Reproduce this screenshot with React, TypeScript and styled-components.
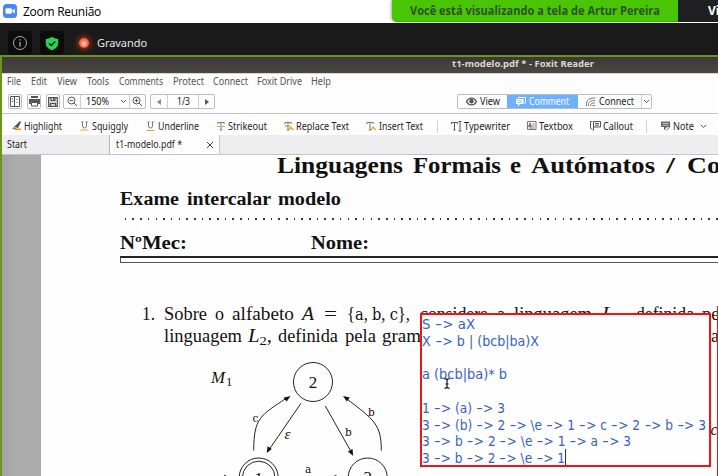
import React, { useLayoutEffect, useRef, useState } from "react";
import styled, { createGlobalStyle, css } from "styled-components";

const Global = createGlobalStyle`
  * { box-sizing: border-box; }
  body { margin: 0; background: #fff; overflow: hidden; }
`;

/* ---------- text that fills a given width ---------- */

const Spread = styled.span<{ $w: number; $ml: number }>`
  display: block;
  flex: none;
  width: ${(p) => p.$w}px;
  margin-left: ${(p) => p.$ml}px;
  white-space: pre;
`;

const Stretched = styled.span`
  display: inline-block;
  transform-origin: 0 50%;
`;

type LabelProps = { w: number; ml?: number; children: React.ReactNode };

/* Adjusts the letter spacing. */
function Label({ w, ml = 0, children }: LabelProps) {
  const inner = useRef<HTMLSpanElement>(null);
  const [gap, setGap] = useState(0);
  useLayoutEffect(() => {
    const el = inner.current;
    if (!el) return;
    const count = (el.textContent || "").length;
    const natural = el.getBoundingClientRect().width - gap * count;
    setGap((w - natural) / Math.max(count, 1));
  }, [w]);
  return (
    <Spread $w={w} $ml={ml}>
      <span ref={inner} style={{ letterSpacing: gap }}>{children}</span>
    </Spread>
  );
}

/* Adjusts the width of the glyphs themselves. */
function Word({ w, ml = 0, children }: LabelProps) {
  const inner = useRef<HTMLSpanElement>(null);
  const [scale, setScale] = useState(1);
  useLayoutEffect(() => {
    const el = inner.current;
    if (el) setScale((w * scale) / el.getBoundingClientRect().width);
  }, [w]);
  return (
    <Spread $w={w} $ml={ml}>
      <Stretched ref={inner} style={{ transform: `scaleX(${scale})` }}>{children}</Stretched>
    </Spread>
  );
}

/* ---------- meeting window ---------- */

const Window = styled.div`
  width: 718px;
  height: 476px;
  overflow: hidden;
  display: flex;
  flex-direction: column;
  font-family: "Noto Sans", "Open Sans", sans-serif;
`;

const MeetingTitle = styled.header`
  height: 23px;
  flex: none;
  display: flex;
  padding-left: 3px;
  font: 12px/23px "Open Sans", sans-serif;
  color: #000;
  > svg { margin-top: 4px; flex: none; }
`;

const Banner = styled.div`
  width: 286px;
  height: 22px;
  margin-left: 291px;
  padding-left: 18px;
  background: #49c503;
  border-bottom: 1px solid #3eae02;
  border-bottom-left-radius: 5px;
  box-shadow: -1px 0 3px rgba(0, 0, 0, 0.35);
  color: #2f5123;
  font-weight: 700;
  line-height: 22px;
`;

const BannerMenu = styled.div`
  flex: 1;
  height: 22px;
  padding-left: 30px;
  background: #202023;
  color: #fff;
  font-weight: 700;
  line-height: 22px;
  overflow: hidden;
`;

const MeetingBar = styled.div`
  height: 32px;
  flex: none;
  background: #1a1a1a;
  display: flex;
  align-items: flex-end;
  padding-left: 8px;
  color: #e6e6e6;
  font: 11px/24px "Noto Sans", sans-serif;
`;

const Badge = styled.div`
  width: 24px;
  height: 24px;
  margin-right: 8px;
  border-radius: 4px;
  background: #0b0c0b;
  display: grid;
  place-items: center;
`;

const Recording = styled.i`
  width: 10px;
  height: 10px;
  margin: 0 0 7px 7px;
  border-radius: 50%;
  background: radial-gradient(ellipse at 50% 55%, #ffc0b0 0 15%, #ff6a55 45%, #f04a35 100%);
  box-shadow: 0 0 4px 2px #8a2f10;
`;

/* ---------- shared screen: PDF reader ---------- */

const Shared = styled.main`
  flex: 1;
  min-height: 0;
  border-top: 2px solid #6b961b;
  border-left: 2px solid #6b961b;
  display: flex;
  flex-direction: column;
  background: #fdfdfd;
`;

const ReaderTitle = styled.div`
  height: 16px;
  flex: none;
  display: flex;
  padding-left: 450px;
  background: linear-gradient(#3b3836, #4b4843);
  color: #dcd8d0;
  font: 700 9.5px/14px "Noto Sans", sans-serif;
`;

const MenuBar = styled.nav`
  height: 19px;
  flex: none;
  display: flex;
  padding-left: 5px;
  border-top: 1px solid #d5d3d0;
  color: #555;
  font-size: 10px;
  line-height: 15px;
`;

const Toolbar = styled.div`
  height: 22px;
  flex: none;
  display: flex;
  padding: 2px 0 0 6px;
  border-bottom: 1px solid #c4c4c4;
  font-size: 10px;
  color: #222;
`;

const Group = styled.div<{ $ml?: number }>`
  display: flex;
  height: 15px;
  margin-left: ${(p) => p.$ml ?? 0}px;
  border: 1px solid #bdbdbd;
  border-radius: 2px;
  background: #fdfdfd;
  overflow: hidden;
`;

const Cell = styled.div<{ $w: number; $active?: boolean; $divided?: boolean }>`
  width: ${(p) => p.$w}px;
  display: flex;
  align-items: center;
  justify-content: center;
  gap: 3px;
  line-height: 13px;
  background: ${(p) => (p.$active ? "#6cb1fb" : "transparent")};
  color: ${(p) => (p.$active ? "#fff" : "#222")};
  border-left: ${(p) => (p.$divided ? "1px solid #cfcfcf" : "0")};
`;

const CommentBar = styled.div`
  height: 21px;
  flex: none;
  display: flex;
  align-items: center;
  padding: 3px 0 0 10px;
  font-size: 10px;
  line-height: 16px;
  color: #1d1d1d;
  > svg { flex: none; }
`;

const Slot = styled.i<{ $w: number }>`
  flex: none;
  width: ${(p) => p.$w}px;
`;

const Divider = styled.i<{ $ml: number; $mr: number }>`
  flex: none;
  width: 1px;
  height: 13px;
  margin: 0 ${(p) => p.$mr}px 0 ${(p) => p.$ml}px;
  background: #d2d2d2;
`;

const Tabs = styled.div`
  height: 20px;
  flex: none;
  display: flex;
  background: #eeeef0;
  border-bottom: 1px solid #c3c3c5;
  font-size: 10px;
  line-height: 19px;
  color: #222;
`;

const Tab = styled.div<{ $w: number; $pad: number; $active?: boolean }>`
  width: ${(p) => p.$w}px;
  padding-left: ${(p) => p.$pad}px;
  display: flex;
  align-items: center;
  ${(p) => p.$active && css`
    background: #fdfdfe;
    border-left: 1px solid #b5b5b7;
    border-right: 1px solid #c9c9cb;
  `}
`;

/* ---------- document ---------- */

const Desk = styled.section`
  flex: 1;
  min-height: 0;
  padding-left: 39px;
  background: linear-gradient(90deg, #a2a3a5, #ababab 12px);
`;

const Page = styled.article`
  position: relative;
  height: 321px;
  overflow: hidden;
  background: #fefefe;
  color: #111;
  font-family: "Liberation Serif", serif;
  font-size: 18px;
`;

const Line = styled.div<{ $top: number; $left: number; $h: number; $bold?: boolean; $size?: number }>`
  display: flex;
  margin-top: ${(p) => p.$top}px;
  padding-left: ${(p) => p.$left}px;
  height: ${(p) => p.$h}px;
  line-height: ${(p) => p.$h}px;
  font-size: ${(p) => p.$size ?? 18}px;
  font-weight: ${(p) => (p.$bold ? 700 : 400)};
  sub { font-size: 0.7em; line-height: 0; vertical-align: -3px; }
  code { font-family: "DejaVu Serif", serif; font-size: 0.88em; line-height: 0; }
`;

const Leader = styled.div`
  height: 2px;
  margin: 9px 0 0 83px;
  background: repeating-linear-gradient(90deg, transparent 0 0.8px, #333 0.8px 2.4px, transparent 2.4px 7.68px);
`;

const DoubleRule = styled.div`
  height: 7px;
  margin: 3px 0 0 79px;
  border: 1px solid #555;
  border-top: 2px solid #222;
  border-right: 0;
`;

const Diagram = styled.svg`
  display: block;
  fill: none;
  stroke: #222;
  stroke-width: 1;
  text { fill: #111; stroke: none; }
  .tt { font: 10.5px "DejaVu Serif", serif; }
  .it { font-style: italic; }
`;

const Note = styled.div`
  position: absolute;
  left: 379px;
  top: 158px;
  width: 291px;
  height: 154px;
  border: 2px solid #f01414;
  background: #fefefe;
  color: #3560c2;
  font-family: "DejaVu Sans Condensed", "DejaVu Sans", sans-serif;
  font-size: 14.5px;
  font-stretch: condensed;
`;

const NoteLine = styled.div`
  height: 16.75px;
  display: flex;
  line-height: 18px;
`;

const Dash = styled.span`
  display: inline-block;
  transform: scaleX(1.5);
  margin: 0 1.5px;
`;

const Caret = styled.i`
  width: 1px;
  height: 16px;
  background: #333;
`;

const Margin = styled.i`
  position: absolute;
  right: 0;
  top: 151px;
  bottom: 0;
  width: 1px;
  background: #f01414;
`;

const Pointer = styled.svg`
  position: absolute;
  left: 402px;
  top: 223px;
`;

/* ---------- icons ---------- */

const stroke = { fill: "none", stroke: "#555", strokeWidth: 1 };

const Chevron = () => (
  <svg width="7" height="5" {...stroke}><path d="M1 1l2.5 2.5L6 1" /></svg>
);

const Magnifier = ({ plus }: { plus?: boolean }) => (
  <svg width="11" height="11" {...stroke}>
    <circle cx="4.5" cy="4.5" r="3.5" />
    <path d="M7 7l3 3M2.8 4.5h3.4" />
    {plus && <path d="M4.5 2.8v3.4" />}
  </svg>
);

type MarkKind = "squiggly" | "underline" | "strike" | "replace" | "insert";

const Mark = ({ kind }: { kind: MarkKind }) => (
  <svg width="10" height="11" {...stroke} stroke="#777">
    {kind === "squiggly" || kind === "underline" ? (
      <>
        <path d="M2.5 1v4a2 2 0 0 0 4 0V1M1.3 1h2M5.7 1h2" />
        <path stroke="#e8a63a" d={kind === "underline" ? "M.5 9.5h8" : "M.5 9.5l1.5-1 1.5 1 1.5-1 1.5 1 1.5-1"} />
      </>
    ) : (
      <path d="M.8 3V1.5h6.4V3M4 1.5V9M2.8 9h2.4" />
    )}
    {kind === "strike" && <path stroke="#e8a63a" d="M0 5.5h8" />}
    {kind === "replace" && <path stroke="#e8a63a" strokeWidth="1.3" d="M1 5h5M5 9l1.8-3L9.3 9" />}
    {kind === "insert" && <path stroke="#e8a63a" strokeWidth="1.3" d="M5.2 9l2-3.2L9.5 9" />}
  </svg>
);

/* ---------- content ---------- */

const menus: [string, number, number][] = [
  ["File", 0, 14], ["Edit", 10, 16], ["View", 10, 20], ["Tools", 10, 22], ["Comments", 10, 44],
  ["Protect", 10, 31], ["Connect", 9, 35], ["Foxit Drive", 9, 45], ["Help", 9, 20],
];

const noteLines: [string, number][] = [
  ["S -> aX", 53], ["X -> b | (bcb|ba)X", 117], ["", 0], ["a (bcb|ba)* b", 85], ["", 0],
  ["1 -> (a) -> 3", 83], ["3 -> (b) -> 2 -> \\e -> 1 -> c -> 2 -> b -> 3", 284],
  ["3 -> b -> 2 -> \\e -> 1 -> a -> 3", 209], ["3 -> b -> 2 -> \\e -> 1", 143],
];

const withDashes = (text: string) =>
  text.split("-").flatMap((part, i) => (i ? [<Dash key={i}>-</Dash>, part] : [part]));

export default function App() {
  return (
    <Window>
      <Global />
      <MeetingTitle>
        <svg width="14" height="14">
          <rect width="14" height="14" rx="3.5" fill="#4489f5" />
          <rect x="2.5" y="4.3" width="6.4" height="5.4" rx="1.2" fill="#fff" />
          <path d="M9.4 6.3l2.4-1.6v4.8L9.4 7.9z" fill="#fff" />
        </svg>
        <Label ml={6} w={78}>Zoom Reunião</Label>
        <Banner><Word w={250}>Você está visualizando a tela de Artur Pereira</Word></Banner>
        <BannerMenu>Vi</BannerMenu>
      </MeetingTitle>
      <MeetingBar>
        <Badge>
          <svg width="16" height="16" fill="none" stroke="#aaa">
            <circle cx="8" cy="8" r="6.5" /><path d="M8 7v4.5M8 4.3v1.3" strokeWidth="1.3" />
          </svg>
        </Badge>
        <Badge>
          <svg width="14" height="15">
            <path d="M7 .8C5.2 2.2 3 2.8.8 2.9v4.4c0 3.5 3 5.7 6.2 7 3.2-1.3 6.2-3.5 6.2-7V2.9C11 2.8 8.8 2.2 7 .8z" fill="#25d558" />
            <path d="M3.9 7.2l2.3 2.3 4-4.1" fill="none" stroke="#08210f" strokeWidth="1.5" />
          </svg>
        </Badge>
        <Recording />
        <Label ml={8} w={50}>Gravando</Label>
      </MeetingBar>
      <Shared>
        <ReaderTitle><Label w={142}>t1-modelo.pdf * - Foxit Reader</Label></ReaderTitle>
        <MenuBar>
          {menus.map(([name, ml, w]) => <Word key={name} ml={ml} w={w}>{name}</Word>)}
        </MenuBar>
        <Toolbar>
          <Group>
            <Cell $w={12}>
              <svg width="10" height="11" {...stroke}><path d="M.5.5h9v10h-9zM4.5.5v10M1.8 3h1.4M1.8 5.5h1.4M7 3v1M7 6v1" /></svg>
            </Cell>
          </Group>
          <Group $ml={5}>
            <Cell $w={12}>
              <svg width="11" height="11"><path fill="#555" d="M2 0h7v2H2zM0 3h11v5H9V6H2v2H0z" /><path {...stroke} d="M2.5 6.5h6v3.5h-6z" /></svg>
            </Cell>
          </Group>
          <Group $ml={5}>
            <Cell $w={12}>
              <svg width="10" height="10"><path {...stroke} strokeWidth="1.3" d="M.7.7h8.6v8.6H.7zM3 .7v3h4v-3M2 6.5h6M2.5 6.5v3M7.5 6.5v3" /><path fill="#555" d="M5 1h1.5v2H5z" /></svg>
            </Cell>
          </Group>
          <Group $ml={3}>
            <Cell $w={16}><Magnifier /></Cell>
            <Cell $w={49} $divided>
              <Word w={23} ml={3}>150%</Word><Slot $w={5} /><Chevron />
            </Cell>
            <Cell $w={16} $divided><Magnifier plus /></Cell>
          </Group>
          <Group $ml={4}>
            <Cell $w={16}><svg width="4" height="6"><path d="M4 0v6L0 3z" fill="#888" /></svg></Cell>
            <Cell $w={31} $divided><Word w={13}>1/3</Word></Cell>
            <Cell $w={16} $divided><svg width="4" height="6"><path d="M0 0v6l4-3z" fill="#555" /></svg></Cell>
          </Group>
          <Group $ml={242}>
            <Cell $w={49}>
              <svg width="11" height="9"><path d="M.5 4.5C3 0 8 0 10.5 4.5 8 9 3 9 .5 4.5z" {...stroke} strokeWidth="1.3" /><circle cx="5.5" cy="4.3" r="2.2" fill="#555" /></svg>
              <Word w={20}>View</Word>
            </Cell>
            <Cell $w={71} $active>
              <svg width="10" height="10"><path d="M2.5 1.5V.5h7v5.5h-1" fill="none" stroke="#fff" /><path d="M0 2h7.5v5H4L2 9.5V7H0z" fill="#fff" /><path d="M1.5 3.8h4.5M1.5 5.3h4.5" stroke="#6cb1fb" strokeWidth=".7" /></svg>
              <Word w={40}>Comment</Word>
            </Cell>
            <Cell $w={63}>
              <svg width="10" height="10" {...stroke} stroke="#777"><path d="M.5 9C-.5 3 4 .5 9.5 1M2.5 9C1.5 5.5 5 3 9 3.5M4.5 9c0-2.5 2-3.5 4.5-3M6.5 8.5h2.5" /></svg>
              <Word w={35}>Connect</Word>
            </Cell>
            <Cell $w={10} $divided><Chevron /></Cell>
          </Group>
        </Toolbar>
        <CommentBar>
          <svg width="10" height="10"><path d="M2 6L8 0l1 1-3 6z" fill="#555" /><path d="M0 8l2-2 3 2z" fill="#777" /><path d="M3.5 7.5H9V9H2z" fill="#e8932a" /></svg>
          <Word ml={2} w={38}>Highlight</Word><Slot $w={18} />
          <Mark kind="squiggly" /><Word ml={2} w={36}>Squiggly</Word><Slot $w={18} />
          <Mark kind="underline" /><Word ml={1.5} w={41}>Underline</Word><Slot $w={18} />
          <Mark kind="strike" /><Word ml={1.5} w={39}>Strikeout</Word><Slot $w={17} />
          <Mark kind="replace" /><Word ml={2} w={53}>Replace Text</Word><Slot $w={17} />
          <Mark kind="insert" /><Word ml={2.5} w={44}>Insert Text</Word>
          <Divider $ml={14} $mr={13} />
          <svg width="11" height="11" {...stroke}><path d="M.5 3V1.5h6V3M3.5 1.5V9M2.5 9h2M7.5.5h3M7.5 10h3M9 .5V10" /></svg>
          <Word ml={2} w={46}>Typewriter</Word><Slot $w={17} />
          <svg width="10" height="10" {...stroke} stroke="#777"><path d="M.5.5h8.5v8h-8.5zM5.5 3h2M5.5 5h2M2 7h5.5" /><path d="M1.5 5.5L3 1.8l1.5 3.7z" fill="#777" /></svg>
          <Word ml={2} w={34}>Textbox</Word><Slot $w={17} />
          <svg width="11" height="11" {...stroke}><path d="M3.5.5h7v5.5h-7zM2.5.5h-2v6.5l2 2M5 2.5h4M5 4.2h4M3.5 6v3.5" /></svg>
          <Word ml={2} w={30}>Callout</Word>
          <Divider $ml={13} $mr={14} />
          <svg width="10" height="10"><path d="M0 .5h9v5.5H6L3 9.5V6H0z" fill="#666" /><path d="M1.5 2.3H7.5M1.5 4.2h6" stroke="#ddd" strokeWidth=".8" /><path d="M5.5 9.5l3.5-4" stroke="#666" /></svg>
          <Word ml={2} w={21}>Note</Word><Slot $w={6} /><Chevron />
        </CommentBar>
        <Tabs>
          <Tab $w={107} $pad={5}><Word w={20}>Start</Word></Tab>
          <Tab $w={111} $pad={6} $active>
            <Word w={66}>t1-modelo.pdf *</Word><Slot $w={24} />
            <svg width="8" height="8" stroke="#444"><path d="M1 1l6 6M7 1L1 7" /></svg>
          </Tab>
        </Tabs>
        <Desk>
          <Page>
            <Line $top={0} $left={236} $h={20} $size={24} $bold>
              <Word w={126}>Linguagens</Word>
              <Word w={88} ml={10}>Formais</Word>
              <Word w={11} ml={9}>e</Word>
              <Word w={124} ml={10}>Autómatos</Word>
              <Word w={9} ml={11}>/</Word>
              <Word w={130} ml={12}>Compilado</Word>
            </Line>
            <Line $top={14} $left={79} $h={20} $bold>
              <Word w={59}>Exame</Word><Word w={84} ml={8}>intercalar</Word><Word w={63} ml={7}>modelo</Word>
            </Line>
            <Leader />
            <Line $top={13} $left={79} $h={20} $bold>
              <Word w={67}>NºMec:</Word><Word w={58} ml={124}>Nome:</Word>
            </Line>
            <DoubleRule />
            <Line $top={41} $left={101} $h={21.5}>
              <Word w={13}>1.</Word><Word w={43} ml={9}>Sobre</Word><Word w={9} ml={8}>o</Word>
              <Word w={62} ml={8}>alfabeto</Word><Word w={12} ml={8}><i>A</i></Word><Word w={13} ml={10}>=</Word>
              <Word w={63} ml={10}>{"{"}<code>a</code>, <code>b</code>, <code>c</code>{"}"},</Word>
              <Word w={68} ml={10}>considere</Word><Word w={8} ml={9}>a</Word><Word w={78} ml={9}>linguagem</Word>
              <Word w={24} ml={10}><i>L</i><sub>1</sub>,</Word><Word w={58} ml={10}>definida</Word><Word w={31} ml={8}>pela</Word>
            </Line>
            <Line $top={0} $left={123} $h={21.5}>
              <Word w={78}>linguagem</Word><Word w={24} ml={6}><i>L</i><sub>2</sub>,</Word>
              <Word w={60} ml={6}>definida</Word><Word w={31} ml={6.5}>pela</Word><Word w={75} ml={6.5}>gramática</Word>
              <Word w={8} ml={254}>a</Word>
            </Line>
            <Diagram width="677" height="129" viewBox="41 347 677 129">
              <circle cx="313" cy="382" r="19.5" />
              <circle cx="258.7" cy="477.5" r="19.5" />
              <circle cx="258.7" cy="477.5" r="16.3" />
              <circle cx="367.7" cy="477.5" r="19.5" />
              <path d="M253.7 450.5C253.7 418 261 415 286 398.5M301 403.3L269.5 449M325.3 406L351 451.5M381.3 450.5C381.3 424 374 420 347 399" />
              <g fill="#111" stroke="none">
                <path d="M290.5 396l-7 1.7 3.2 3.8z" />
                <path d="M266.8 453l.8-6.8 4.2 2.9z" />
                <path d="M353.2 456l-5.2-4.5 4.5-2.5z" />
                <path d="M343 396l6.8 1.5-3 3.9z" />
                <path d="M224 475.3h2v.7h-2zM334.5 475.3h2v.7h-2z" />
              </g>
              <text x="211" y="383" className="it" fontSize="17" textLength="14" lengthAdjust="spacingAndGlyphs">M</text>
              <text x="226" y="385.5" fontSize="12.5">1</text>
              <text x="308.7" y="388" fontSize="17">2</text>
              <text x="254.5" y="484" fontSize="17">1</text>
              <text x="363.5" y="483" fontSize="17">3</text>
              <text x="252.5" y="422" className="tt">c</text>
              <text x="284.5" y="439" className="it" fontSize="15">ε</text>
              <text x="345" y="436" className="tt">b</text>
              <text x="368" y="415.5" className="tt">b</text>
              <text x="305" y="473" className="tt">a</text>
              <text x="710.5" y="435" className="it" fontSize="16">c</text>
            </Diagram>
            <Note>
              {noteLines.map(([text, w], i) => (
                <NoteLine key={i}>
                  {text && <Word w={w}>{withDashes(text)}</Word>}
                  {i === noteLines.length - 1 && <Caret />}
                </NoteLine>
              ))}
            </Note>
            <Pointer width="8" height="11" fill="none" stroke="#111" strokeWidth="1.2">
              <path d="M1.5.8H3l1 1 1-1h1.5M4 1.5v8M1.5 10.2H3l1-1 1 1h1.5M2.5 6h3" />
            </Pointer>
            <Margin />
          </Page>
        </Desk>
      </Shared>
    </Window>
  );
}
